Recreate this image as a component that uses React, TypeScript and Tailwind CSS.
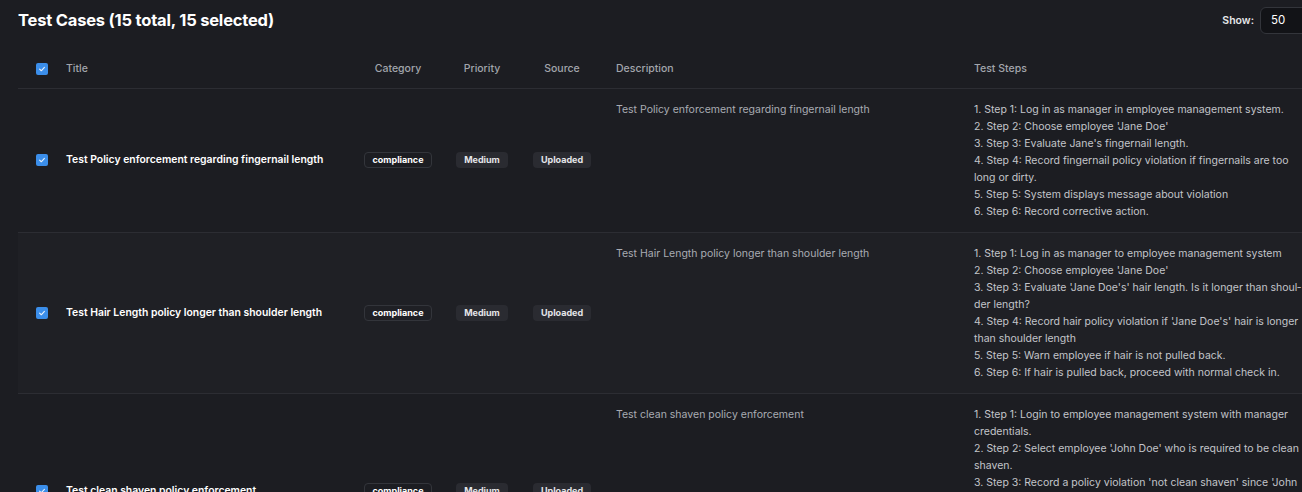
import React from "react";

type TestCase = {
  id: number;
  title: string;
  category: string;
  priority: string;
  source: string;
  description: string;
  steps: string[];
  shade?: boolean;
};

const cases: TestCase[] = [
  {
    id: 1,
    title: "Test Policy enforcement regarding fingernail length",
    category: "compliance",
    priority: "Medium",
    source: "Uploaded",
    description: "Test Policy enforcement regarding fingernail length",
    steps: [
      "1. Step 1: Log in as manager in employee management system.",
      "2. Step 2: Choose employee 'Jane Doe'",
      "3. Step 3: Evaluate Jane's fingernail length.",
      "4. Step 4: Record fingernail policy violation if fingernails are too long or dirty.",
      "5. Step 5: System displays message about violation",
      "6. Step 6: Record corrective action.",
    ],
  },
  {
    id: 2,
    title: "Test Hair Length policy longer than shoulder length",
    category: "compliance",
    priority: "Medium",
    source: "Uploaded",
    description: "Test Hair Length policy longer than shoulder length",
    steps: [
      "1. Step 1: Log in as manager to employee management system",
      "2. Step 2: Choose employee 'Jane Doe'",
      "3. Step 3: Evaluate 'Jane Doe's' hair length. Is it longer than shoul\u00ADder length?",
      "4. Step 4: Record hair policy violation if 'Jane Doe's' hair is longer than shoulder length",
      "5. Step 5: Warn employee if hair is not pulled back.",
      "6. Step 6: If hair is pulled back, proceed with normal check in.",
    ],
    shade: true,
  },
  {
    id: 3,
    title: "Test clean shaven policy enforcement",
    category: "compliance",
    priority: "Medium",
    source: "Uploaded",
    description: "Test clean shaven policy enforcement",
    steps: [
      "1. Step 1: Login to employee management system with manager credentials.",
      "2. Step 2: Select employee 'John Doe' who is required to be clean shaven.",
      "3. Step 3: Record a policy violation 'not clean shaven' since 'John Doe' is not clean shaven.",
      "4. Step 4: System displays message about the violation and notifies the employee's supervisor.",
      "5. Step 5: Record corrective action.",
      "6. Step 6: Verify the violation appears in the employee record.",
    ],
  },
];

function Check() {
  return (
    <span className="flex h-[12px] w-[12px] items-center justify-center rounded-[2px] bg-[#3b8eea]">
      <svg width="8" height="8" viewBox="0 0 10 10" fill="none">
        <path d="M2 5.2 4.1 7.2 8 2.9" stroke="#e8f1fc" strokeWidth="1.4" strokeLinecap="round" strokeLinejoin="round" />
      </svg>
    </span>
  );
}

const badge =
  "rounded-[4px] bg-[#2a2b31] px-[8px] py-[2px] text-[9px] font-bold leading-[12px] text-[#e4e5e8]";

export default function App() {
  return (
    <div
      className="h-[492px] w-[1302px] overflow-hidden bg-[#1c1d22] text-white"
      style={{ fontFamily: "Inter, 'Noto Sans', sans-serif" }}
    >
      <div className="w-[1360px] pl-[18px] pr-[20px]">
        <div className="flex h-[50px] items-start justify-between pt-[7px]">
          <h1 className="pt-[2px] text-[16.5px] font-bold leading-[23px] tracking-[-0.2px] text-white">
            Test Cases (15 total, 15 selected)
          </h1>
          <div className="flex items-center gap-[6px]">
            <span className="text-[10.5px] font-semibold text-[#e6e7ea]">Show:</span>
            <div className="flex h-[27px] w-[80px] items-center justify-between rounded-[6px] border border-[#33353b] bg-[#121317] px-[10px] text-[11.5px] text-white">
              <span>50</span>
              <span className="text-[#9a9da4]">▾</span>
            </div>
          </div>
        </div>

        <table className="w-[1322px] table-fixed border-collapse">
          <colgroup>
            <col className="w-[39px]" />
            <col className="w-[298px]" />
            <col className="w-[86px]" />
            <col className="w-[82px]" />
            <col className="w-[78px]" />
            <col className="w-[358px]" />
            <col />
          </colgroup>
          <thead>
            <tr className="h-[38px] border-b border-[#2c2d33] text-[10.5px] font-medium text-[#a2a5ac]">
              <th className="pl-[18px] text-left">
                <Check />
              </th>
              <th className="pl-[9px] text-left font-medium">Title</th>
              <th className="text-center font-medium">Category</th>
              <th className="text-center font-medium">Priority</th>
              <th className="text-center font-medium">Source</th>
              <th className="pl-[15px] text-left font-medium">Description</th>
              <th className="pl-[15px] text-left font-medium">Test Steps</th>
            </tr>
          </thead>
          <tbody>
            {cases.map((c) => (
              <tr
                key={c.id}
                className={`border-b border-[#2c2d33] ${c.shade ? "bg-[#1f2025]" : ""}`}
              >
                <td className="pl-[18px] align-middle">
                  <Check />
                </td>
                <td className="pl-[9px] align-middle text-[10.4px] font-semibold text-white">
                  {c.title}
                </td>
                <td className="align-middle">
                  <div className="flex justify-center">
                    <span className="rounded-[4px] border border-[#33353b] px-[7px] py-[1px] text-[9px] font-bold leading-[12px] text-white">
                      {c.category}
                    </span>
                  </div>
                </td>
                <td className="align-middle">
                  <div className="flex justify-center">
                    <span className={badge}>{c.priority}</span>
                  </div>
                </td>
                <td className="align-middle">
                  <div className="flex justify-center">
                    <span className={badge}>{c.source}</span>
                  </div>
                </td>
                <td className="py-[12px] pl-[15px] pr-[12px] align-top text-[10.5px] leading-[17px] text-[#a9acb3]">
                  {c.description}
                </td>
                <td className="py-[12px] pl-[15px] align-top" lang="en">
                  <div className="w-[328px] text-[10.5px] leading-[17px] text-[#c3c5ca] hyphens-manual">
                    {c.steps.map((s, i) => (
                      <div key={i}>{s}</div>
                    ))}
                  </div>
                </td>
              </tr>
            ))}
          </tbody>
        </table>
      </div>
    </div>
  );
}
